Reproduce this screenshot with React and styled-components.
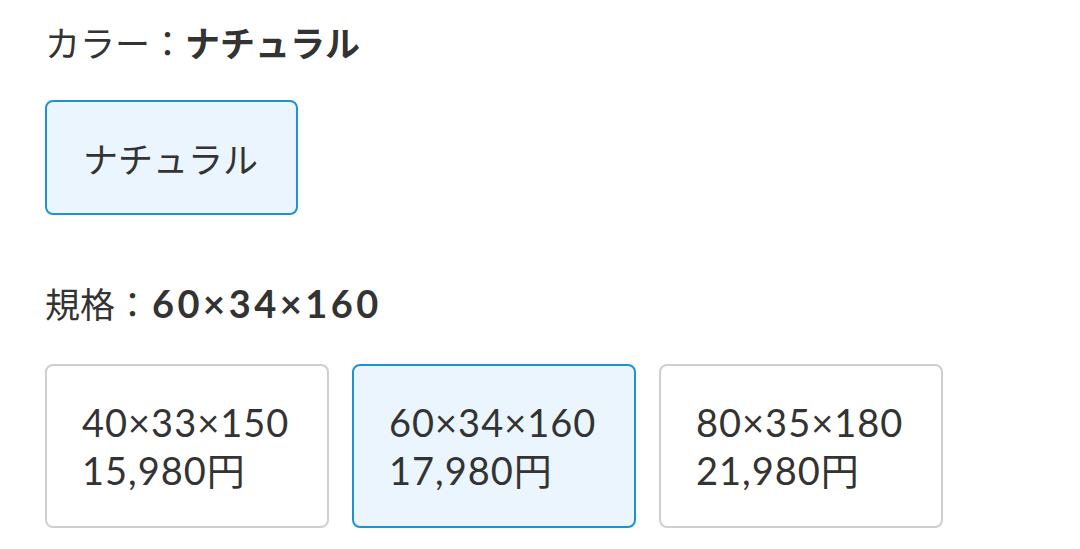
import React, { useState } from 'react'
import styled, { createGlobalStyle } from 'styled-components'

const colors = ['ナチュラル']
const sizes = [
  { name: '40×33×150', price: '15,980円' },
  { name: '60×34×160', price: '17,980円' },
  { name: '80×35×180', price: '21,980円' },
]

function App() {
  const [color, setColor] = useState(0)
  const [size, setSize] = useState(1)

  return (
    <>
      <GlobalStyle />
      <Page>
        <Label>
          カラー：<strong>{colors[color]}</strong>
        </Label>
        <ColorRow>
          {colors.map((c, i) => (
            <ColorOption key={c} selected={i === color} onClick={() => setColor(i)}>
              {c}
            </ColorOption>
          ))}
        </ColorRow>

        <Label>
          規格：<Spec>{sizes[size].name}</Spec>
        </Label>
        <SizeRow>
          {sizes.map((s, i) => (
            <SizeOption key={s.name} selected={i === size} onClick={() => setSize(i)}>
              <span>{s.name}</span>
              <span>{s.price}</span>
            </SizeOption>
          ))}
        </SizeRow>
      </Page>
    </>
  )
}

export default App

const GlobalStyle = createGlobalStyle`
  body {
    margin: 0 ;
    background: #fff ;
    color: #333 ;
    font-family: Lato, "Noto Sans CJK JP", sans-serif ;
  }
`
const Page = styled.div`
  padding: 19px 45px 0 ;
  display: flex ;
  flex-direction: column ;
  align-items: flex-start ;
`
const Label = styled.div`
  font-size: 35px ;
  line-height: 48px ;
  color: #333 ;

  strong {
    font-weight: 700 ;
  }
`
const Spec = styled.strong`
  font-size: 38px ;
  letter-spacing: 3.5px ;
  margin-left: 2px ;
`
const ColorRow = styled.div`
  display: flex ;
  gap: 23px ;
  margin: 33px 0 64px ;
`
const optionBox = props => `
  border: 2px solid ${props.selected ? '#1e93d3' : '#cfcfcf'} ;
  background: ${props.selected ? '#eaf5fd' : '#fff'} ;
  border-radius: 8px ;
  box-sizing: border-box ;
  cursor: pointer ;
  color: #333 ;
`
const ColorOption = styled.div`
  ${optionBox}
  height: 115px ;
  padding: 0 38px 0 36px ;
  display: flex ;
  align-items: center ;
  font-size: 35px ;
`
const SizeRow = styled.div`
  display: flex ;
  gap: 23px ;
  margin-top: 36px ;
`
const SizeOption = styled.div`
  ${optionBox}
  width: 284px ;
  height: 164px ;
  padding-left: 35px ;
  display: flex ;
  flex-direction: column ;
  justify-content: center ;
  font-size: 38px ;
  line-height: 48px ;
  letter-spacing: 1px ;
`
